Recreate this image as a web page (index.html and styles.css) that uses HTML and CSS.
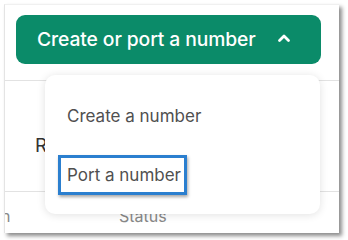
FILE: index.html
```html
<!DOCTYPE html>
<html>
<head>
<meta charset="utf-8">
<link rel="stylesheet" href="styles.css">
</head>
<body>
<div class="frame">
  <div class="page">
    <div class="toolbar">
      <button class="create-btn">
        <span class="btn-label">Create or port a number</span>
        <svg class="chev" width="14" height="10" viewBox="0 0 14 10"><path d="M2.5 7.5 L7 3 L11.5 7.5" fill="none" stroke="#fff" stroke-width="2.8" stroke-linecap="round" stroke-linejoin="round"/></svg>
      </button>
    </div>
    <div class="table">
      <div class="row row-mid"><span class="cell-r">R</span></div>
      <div class="row row-head"><span class="h1">n</span><span class="h2">Status</span></div>
    </div>
    <div class="menu">
      <div class="item">Create a number</div>
      <div class="item"><span class="focus">Port a number</span></div>
    </div>
  </div>
</div>
</body>
</html>
```

FILE: styles.css
```css
html, body {
  margin: 0;
  padding: 0;
  background: #ffffff;
  width: 348px;
  height: 240px;
  overflow: hidden;
  font-family: "Inter", "Open Sans", sans-serif;
}
.frame {
  padding: 4px 0 0 4px;
}
.page {
  position: relative;
  width: 334px;
  height: 228px;
  background: #fff;
  border-left: 1px solid #e4e4e4;
  border-top: 1px solid #f0f0f0;
  box-shadow: 3px 3px 4px rgba(0,0,0,0.45);
  overflow: hidden;
}
.toolbar {
  padding: 10px 0 0 11px;
  height: 76px;
  box-sizing: border-box;
  border-bottom: 1px solid #e2e2e2;
}
.create-btn {
  width: 305px;
  height: 49px;
  border: none;
  border-radius: 9px;
  background: #0b8b69;
  color: #fff;
  display: flex;
  align-items: center;
  padding: 0 0 0 21px;
  font-family: inherit;
  font-size: 19.3px;
  font-weight: 500;
  letter-spacing: -0.1px;
  cursor: pointer;
}
.btn-label {
  margin-top: -1px;
}
.chev {
  margin-left: 21px;
  margin-top: -3px;
}
.table {
  font-size: 16px;
}
.row-mid {
  height: 111px;
  border-bottom: 1px solid #e2e2e2;
  box-sizing: border-box;
  display: flex;
  align-items: center;
  padding-left: 30px;
  color: #333;
  font-size: 19px;
}
.cell-r {
  margin-top: 19px;
}
.row-head {
  height: 40px;
  display: flex;
  align-items: center;
  color: #888;
  font-size: 16px;
  padding-top: 8px;
  box-sizing: border-box;
}
.h1 {
  width: 118px;
  margin-left: -4px;
}
.menu {
  position: absolute;
  left: 40px;
  top: 70px;
  width: 275px;
  height: 139px;
  background: #fff;
  border-radius: 10px;
  box-shadow: 0 1px 8px rgba(0,0,0,0.12);
  padding-top: 21px;
  box-sizing: border-box;
}
.item {
  height: 40px;
  display: flex;
  align-items: center;
  padding-left: 22px;
  font-size: 17px;
  color: #505050;
}
.item + .item {
  margin-top: 19px;
}
.focus {
  margin-left: -9px;
  padding: 7px 3px 7px 6px;
  border: 3px solid #2b7fcf;
  box-shadow: 1px 2px 3px rgba(0,0,0,0.35);
}
```
